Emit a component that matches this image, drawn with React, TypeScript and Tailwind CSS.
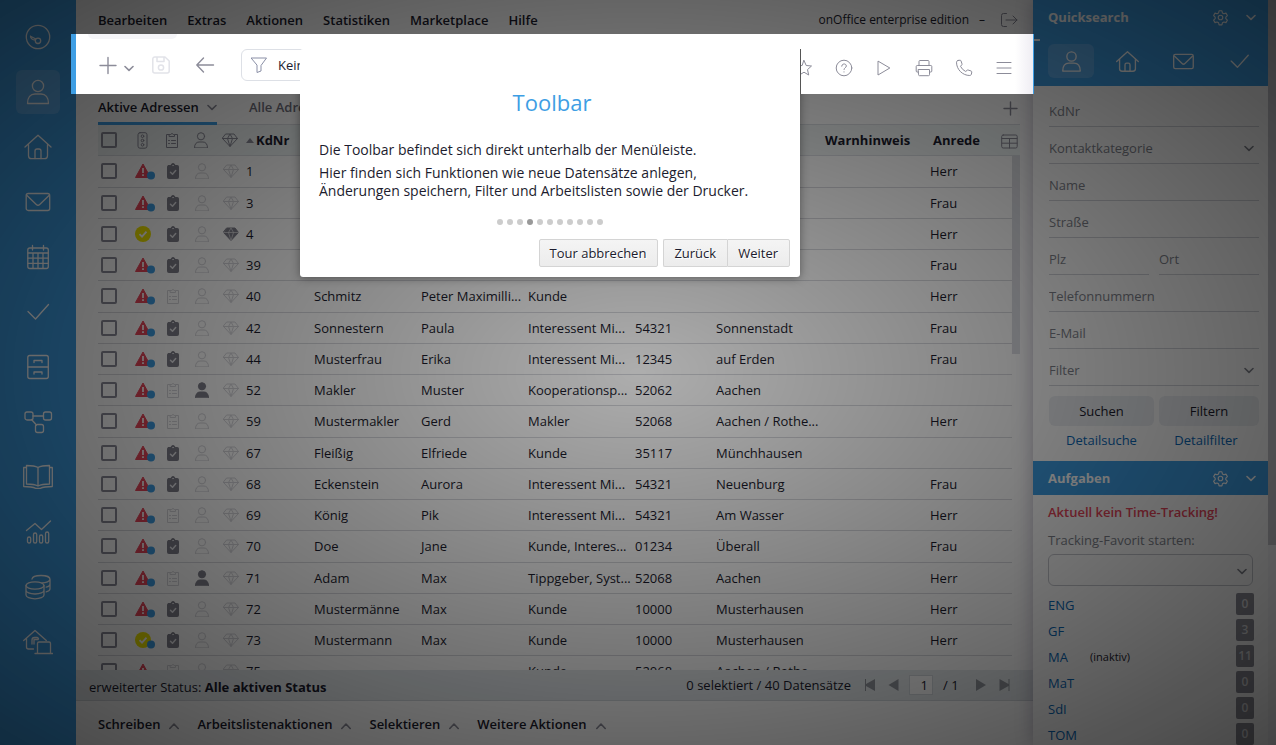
import type { ReactNode } from "react";
import { clsx } from "clsx";

type Address = {
  id: string;
  name?: string;
  firstName?: string;
  kind?: string;
  zip?: string;
  city?: string;
  salutation?: string;
  status?: "warn" | "ok";
  dot?: boolean;
  clip?: boolean;
  user?: boolean;
  vip?: boolean;
};

const addresses: Address[] = [
  { id: "1", clip: true, salutation: "Herr" },
  { id: "3", clip: true, salutation: "Frau" },
  { id: "4", clip: true, salutation: "Herr", status: "ok", dot: false, vip: true },
  { id: "39", clip: true, salutation: "Frau" },
  { id: "40", name: "Schmitz", firstName: "Peter Maximilli...", kind: "Kunde", salutation: "Herr" },
  { id: "42", clip: true, name: "Sonnestern", firstName: "Paula", kind: "Interessent Mi...", zip: "54321", city: "Sonnenstadt", salutation: "Frau" },
  { id: "44", clip: true, name: "Musterfrau", firstName: "Erika", kind: "Interessent Mi...", zip: "12345", city: "auf Erden", salutation: "Frau" },
  { id: "52", user: true, name: "Makler", firstName: "Muster", kind: "Kooperationsp...", zip: "52062", city: "Aachen" },
  { id: "59", name: "Mustermakler", firstName: "Gerd", kind: "Makler", zip: "52068", city: "Aachen / Rothe...", salutation: "Herr" },
  { id: "67", clip: true, name: "Fleißig", firstName: "Elfriede", kind: "Kunde", zip: "35117", city: "Münchhausen" },
  { id: "68", clip: true, name: "Eckenstein", firstName: "Aurora", kind: "Interessent Mi...", zip: "54321", city: "Neuenburg", salutation: "Frau" },
  { id: "69", name: "König", firstName: "Pik", kind: "Interessent Mi...", zip: "54321", city: "Am Wasser", salutation: "Herr" },
  { id: "70", clip: true, name: "Doe", firstName: "Jane", kind: "Kunde, Interes...", zip: "01234", city: "Überall", salutation: "Frau" },
  { id: "71", user: true, name: "Adam", firstName: "Max", kind: "Tippgeber, Syst...", zip: "52068", city: "Aachen", salutation: "Herr" },
  { id: "72", clip: true, name: "Mustermänne", firstName: "Max", kind: "Kunde", zip: "10000", city: "Musterhausen", salutation: "Herr" },
  { id: "73", clip: true, name: "Mustermann", firstName: "Max", kind: "Kunde", zip: "10000", city: "Musterhausen", salutation: "Herr", status: "ok" },
  { id: "75", kind: "Kunde", zip: "52068", city: "Aachen / Rothe..." },
];

const tasks = [
  { name: "ENG", count: 0 },
  { name: "GF", count: 3 },
  { name: "MA", count: 11, inactive: true },
  { name: "MaT", count: 0 },
  { name: "SdI", count: 0 },
  { name: "TOM", count: 0 },
];

type IconProps = {
  size: number;
  box?: number;
  stroke?: number;
  className?: string;
  children: ReactNode;
};

function Icon({ size, box = size, stroke = 1, className, children }: IconProps) {
  return (
    <svg
      aria-hidden="true"
      className={clsx("shrink-0", className)}
      fill="none"
      height={size}
      stroke="currentColor"
      strokeLinecap="round"
      strokeLinejoin="round"
      strokeWidth={stroke}
      viewBox={`0 0 ${box} ${box}`}
      width={size}
    >
      {children}
    </svg>
  );
}

const personPath = (
  <>
    <circle cx="15" cy="9" r="5.6" />
    <path d="M4.5 26.5c0-6 3-9.5 7.5-9.5h6c4.5 0 7.5 3.5 7.5 9.5z" />
  </>
);

const housePath = (
  <>
    <path d="M2 15 15 3.2 28 15" />
    <path d="M5.5 12.5v11.2a3 3 0 0 0 3 3h13a3 3 0 0 0 3-3V12.5" />
    <path d="M12 26.5V19a2 2 0 0 1 2-2h2a2 2 0 0 1 2 2v7.5" />
  </>
);

const mailPath = (
  <>
    <rect height="17" rx="2" width="23.5" x="3.2" y="6.5" />
    <path d="m4 8.5 9.3 9a2.5 2.5 0 0 0 3.4 0L26 8.5" />
  </>
);

const checkPath = <path d="m5 14.5 7.5 7.5L25.5 7.5" />;

const navItems: { label: string; icon: ReactNode }[] = [
  {
    label: "Dashboard",
    icon: (
      <>
        <circle cx="15" cy="15" r="11.7" />
        <circle cx="15" cy="18.8" r="2.7" />
        <path d="M7.5 14.2c.2 2.4 2 3.6 4.8 3.8M7.5 14.2l5.3 2.8" />
      </>
    ),
  },
  { label: "Adressen", icon: personPath },
  { label: "Immobilien", icon: housePath },
  { label: "E-Mail", icon: mailPath },
  {
    label: "Kalender",
    icon: (
      <>
        <rect height="20.5" rx="2" width="20.5" x="4.8" y="6" />
        <path d="M9.5 3.5V8M20.5 3.5V8M5 11h20M5 16.2h20M5 21.4h20M10 11v15.3M15 11v15.3M20 11v15.3" />
      </>
    ),
  },
  { label: "Aufgaben", icon: checkPath },
  {
    label: "Dateien",
    icon: (
      <>
        <rect height="23" rx="2" width="20.5" x="4.8" y="3.5" />
        <path d="M5 15h20M11 10.5v-2h8v2M11 22v-2h8v2" />
      </>
    ),
  },
  {
    label: "Prozesse",
    icon: (
      <>
        <rect height="8" rx="2" width="8" x="2" y="5" />
        <rect height="8" rx="2" width="8" x="20.5" y="5" />
        <rect height="8" rx="2" width="8" x="12.5" y="17.5" />
        <path d="M10 9h10.5M8.500 12.500l5 5.500" />
      </>
    ),
  },
  {
    label: "Bibliothek",
    icon: (
      <>
        <path d="M15 5.500C12 3.800 7.500 3.500 3.500 3.500V22c4 0 8.500.5 11.500 2 3-1.500 7.500-2 11.500-2V3.500c-4 0-8.500.3-11.500 2zM15 5.500V24" />
        <path d="M3.500 5.500H.7v19c4.500 0 9.300.5 12 1.800h4.600c2.700-1.300 7.500-1.800 12-1.800v-19h-2.800" />
      </>
    ),
  },
  {
    label: "Statistik",
    icon: (
      <>
        <rect height="6" rx="1.6" width="3.2" x="4.500" y="20" />
        <rect height="10" rx="1.6" width="3.2" x="10.500" y="16" />
        <rect height="8" rx="1.6" width="3.2" x="16.500" y="18" />
        <rect height="11" rx="1.6" width="3.2" x="22.500" y="15" />
        <path d="m3.500 13.500 8.500-7 6.500 6L27.500 4" />
      </>
    ),
  },
  {
    label: "Buchhaltung",
    icon: (
      <>
        <ellipse cx="12" cy="13.5" rx="9" ry="3.7" />
        <path d="M3 13.500v9.500c0 2.200 4 3.800 9 3.800s9-1.600 9-3.800v-9.500M3 18.200c0 2.200 4 3.800 9 3.800s9-1.600 9-3.800" />
        <path d="M9 7c.3-2 4-3.500 9-3.500s9 1.500 9 3.700v9.500c0 1.500-1.500 2.500-3.800 3.100M27 7.200c0 2.200-4 3.700-8 3.700M27 12c0 1.500-1.500 2.600-3.800 3.100" />
      </>
    ),
  },
  {
    label: "Marketing",
    icon: (
      <>
        <path d="m.7 13.500 11.300-10 11.300 10M3.500 11.500V20a2 2 0 0 0 2 2h5" />
        <path d="M15 12.500h-4v4.500M9 17v-4a2.500 2.500 0 0 1 2.500-2.500H14a1.500 1.500 0 0 1 1.500 1.500" />
        <path d="M14.500 25.500v-9a1.500 1.500 0 0 1 1.500-1.500h10a1.500 1.500 0 0 1 1.500 1.500v9M12 26.500h17.500" />
      </>
    ),
  },
];

function Chevron({ className, up }: { className?: string; up?: boolean }) {
  return (
    <Icon className={className} size={10} stroke={1.6}>
      <path d={up ? "m.8 7.5 4.200-4.500 4.200 4.500" : "m1 3.500 4 3.800 4-3.800"} />
    </Icon>
  );
}

function Gear() {
  return (
    <Icon box={24} size={17} stroke={1.6}>
      <circle cx="12" cy="12" r="3.200" />
      <path d="M10 2.500h4l.7 3 2.100 1.200 2.900-.9 2 3.500-2.200 2.100v2.200l2.200 2.100-2 3.500-2.900-.9-2.100 1.200-.7 3h-4l-.7-3-2.100-1.200-2.900.9-2-3.500 2.200-2.100v-2.200L2.300 9.300l2-3.500 2.900.9 2.100-1.200z" />
    </Icon>
  );
}

function Diamond({ filled }: { filled?: boolean }) {
  return (
    <Icon className="mr-px" size={16}>
      <path
        d="M4 2h8l3.500 4.500L8 14.500.5 6.500z"
        fill={filled ? "currentColor" : "none"}
      />
      <path
        className={clsx(filled && "text-[#d8d8dc]")}
        d="M.5 6.500h15M5.500 6.500 8 14.500l2.500-8M5.500 6.500 8 2l2.500 4.500"
        strokeWidth={filled ? 0.8 : 1}
      />
    </Icon>
  );
}

function Person({ filled }: { filled?: boolean }) {
  return (
    <Icon className="mr-px" size={16}>
      <circle cx="8" cy="4.3" fill={filled ? "currentColor" : "none"} r="3.6" />
      <path
        d="M1.500 15.500c0-3.500 2-5.500 4.500-5.500h4c2.500 0 4.500 2 4.500 5.500z"
        fill={filled ? "currentColor" : "none"}
      />
    </Icon>
  );
}

function Clipboard({ checked }: { checked?: boolean }) {
  if (checked) {
    return (
      <Icon className="mr-px" size={16}>
        <rect fill="currentColor" height="13" rx="1" width="11" x="2.5" y="2.5" />
        <path d="M6 2.500a2 2 0 0 1 4 0" fill="currentColor" />
        <path className="text-[#e6e6ea]" d="m5.500 9.200 2 2 3.200-3.700" strokeWidth="1.5" />
        <circle className="text-[#e6e6ea]" cx="8" cy="2.600" fill="currentColor" r=".3" />
      </Icon>
    );
  }
  return (
    <Icon className="mr-px" size={16}>
      <path d="M5 2.500H2.500v13h11v-13H11" />
      <path d="M5.500 2.500h1.200a1.400 1.400 0 0 1 2.600 0h1.200v2h-5z" />
      <path d="M4.500 8.500h1M7.500 8.500h4M4.500 11.500h1M7.500 11.500h4" />
    </Icon>
  );
}

function StatusMark({ status = "warn", dot = true }: Pick<Address, "status" | "dot">) {
  return (
    <svg aria-label={status} className="-mr-3" height="17" role="img" viewBox="0 0 21 17" width="21">
      {status === "ok" ? (
        <>
          <circle cx="8" cy="8" fill="#f0e600" r="8" />
          <path d="m4.500 8.200 2.500 2.500 4.500-5" fill="none" stroke="#fff" strokeWidth="1.9" />
        </>
      ) : (
        <>
          <path d="M8 1 15.500 14.500H.5z" fill="#e8475b" stroke="#e8475b" strokeLinejoin="round" />
          <path d="M8 5v5M8 11.300v1.700" stroke="#fff" strokeWidth="1.7" />
        </>
      )}
      {dot && <circle cx="16" cy="12.5" fill="#3e9ee4" r="4" />}
    </svg>
  );
}

function Checkbox({ label }: { label: string }) {
  return (
    <input
      aria-label={label}
      className="ml-[3px] block size-4 appearance-none rounded-xs border-2 border-[#8c8c99]"
      type="checkbox"
    />
  );
}

function NavBar() {
  return (
    <nav className="flex w-[76px] shrink-0 flex-col items-center gap-[11px] bg-[#3e9ee4] pt-[15px] text-white">
      {navItems.map((item, index) => (
        <button
          aria-label={item.label}
          className={clsx(
            "flex size-11 shrink-0 items-center justify-center rounded-md",
            index === 1 && "bg-[#5fadea]",
          )}
          key={item.label}
        >
          <Icon size={30} stroke={1.3}>
            {item.icon}
          </Icon>
        </button>
      ))}
    </nav>
  );
}

function MenuBar() {
  return (
    <header className="flex h-[34px] shrink-0 items-center bg-white pt-1.5 pr-[15px] pl-[22px]">
      <div className="flex flex-1 gap-5 font-semibold">
        {["Bearbeiten", "Extras", "Aktionen", "Statistiken", "Marketplace", "Hilfe"].map((item) => (
          <button key={item}>{item}</button>
        ))}
      </div>
      <span className="text-xs">onOffice enterprise edition</span>
      <span className="mx-2.5 text-xs">–</span>
      <button aria-label="Abmelden" className="ml-[5px] text-[#8c8c99]">
        <Icon size={18}>
          <path d="M6.500 2.500h-3a2 2 0 0 0-2 2v9a2 2 0 0 0 2 2h3M6 9h11M13 5l4 4-4 4" />
        </Icon>
      </button>
    </header>
  );
}

const toolIcons: { label: string; icon: ReactNode }[] = [
  {
    label: "Favoriten",
    icon: <path d="m9 1.500 2.200 5 5.300.5-4 3.600 1.200 5.400L9 13.200 4.300 16l1.200-5.400-4-3.600 5.300-.5z" />,
  },
  {
    label: "Hilfe",
    icon: (
      <>
        <circle cx="9" cy="9" r="7.8" />
        <path d="M6.700 7.200c0-3 4.600-3 4.600-.2 0 1.800-2.300 1.700-2.300 3.500M9 12.800v.2" />
      </>
    ),
  },
  { label: "Start", icon: <path d="M3 2.500v13.500L14.500 9.200z" /> },
  {
    label: "Drucken",
    icon: (
      <>
        <path d="M4 6.500v-4a1 1 0 0 1 1-1h8a1 1 0 0 1 1 1v4M3.500 13h-1.300a1 1 0 0 1-1-1V7.500a1 1 0 0 1 1-1h13.600a1 1 0 0 1 1 1V12a1 1 0 0 1-1 1h-1.300" />
        <path d="M3.500 10.500h11v5.200a1 1 0 0 1-1 1h-9a1 1 0 0 1-1-1z" />
      </>
    ),
  },
  {
    label: "Anrufen",
    icon: (
      <path d="M3 1.500 5 1.200c.5 0 .9.200 1 .7l1 3c.1.400 0 .8-.3 1L5.500 7.300a11 11 0 0 0 5.200 5.200l1.400-1.200c.3-.3.7-.4 1-.3l3 1c.5.200.7.600.7 1l-.4 2c-.1.900-.8 1.500-1.600 1.500C7.500 16.500 1.500 10.500 1.500 3.200c0-.8.7-1.600 1.500-1.700z" />
    ),
  },
  { label: "Menü", icon: <path d="M2 3.500h14M2 9h14M2 14.500h14" /> },
];

// sits above the dimmed page while the tour explains it
function Toolbar() {
  return (
    <div className="relative z-20 -mr-px -ml-[5px] flex h-[60px] shrink-0 border-r border-l-[5px] border-[#3e9ee4] bg-linear-to-l from-[#efedf3] to-white to-[18px] pr-[20px] pl-[22px] text-[#8c8c99]">
      <div className="absolute top-0 left-3 h-[5px] w-[89px] rounded-b-md bg-[#f5f5f8]" />
      <div className="flex flex-1 items-center pt-0.5">
        <button aria-label="Neu" className="flex items-center gap-1.5">
          <Icon size={20} stroke={1.4}>
            <path d="M10 2.500v16M2 10.500h16" />
          </Icon>
          <Chevron className="mt-1.5" />
        </button>
        <button aria-label="Speichern" className="ml-[17px] text-[#e2e3e9]" disabled>
          <Icon size={20} stroke={1.5}>
            <path d="M1.800 4a2 2 0 0 1 2-2H14l4.200 4v10a2 2 0 0 1-2 2H3.800a2 2 0 0 1-2-2zM6 2v4.500h7V2" />
            <circle cx="10" cy="12.5" r="2.6" />
          </Icon>
        </button>
        <button aria-label="Zurück" className="ml-6">
          <Icon size={20} stroke={1.4}>
            <path d="M18.500 10H1.800M8.500 3 1.800 10l6.700 7" />
          </Icon>
        </button>
        <button className="ml-[26px] flex h-8 w-[200px] items-center rounded-md border border-[#dde0e6] pl-2 text-[#1c1c2e]">
          <Icon className="text-[#8a8fa6]" size={18}>
            <path d="M1.500 2h15L11 9.500V15l-4 1.500v-7z" />
          </Icon>
          <span className="ml-2.5">Kein Filter</span>
        </button>
      </div>
      <div className="flex items-center gap-[22px] pt-2">
        {toolIcons.map((tool) => (
          <button aria-label={tool.label} key={tool.label}>
            <Icon size={18}>{tool.icon}</Icon>
          </button>
        ))}
      </div>
    </div>
  );
}

function Tabs() {
  return (
    <div className="mr-[13px] ml-[22px] flex h-[31px] shrink-0 border-b border-[#dcdfe4]">
      <button className="-mb-px flex w-[119px] items-center gap-2 border-b-3 border-[#3e9ee4] pb-0.5 font-semibold whitespace-nowrap">
        Aktive Adressen
        <Chevron className="text-[#8c8c99]" />
      </button>
      <button className="ml-8 pb-1 font-semibold text-[#70707c]">Alle Adressen</button>
      <button aria-label="Tab hinzufügen" className="ml-auto text-[#8c8c99]">
        <Icon size={20} stroke={1.4}>
          <path d="M10.500 3v13M4 9.500h13" />
        </Icon>
      </button>
    </div>
  );
}

const headCell = "h-[31px] border-b border-[#dcdfe4] bg-[#f0f5f5] p-0 text-left font-bold";
const bodyCell = "overflow-hidden border-b border-[#d8d9de] p-0 pl-px whitespace-nowrap";
const iconBox = "flex justify-center";
const iconOn = "text-[#80808c]";
const iconOff = "text-[#d6d6db]";

function AddressTable() {
  return (
    <div className="relative mr-[13px] ml-[22px] flex min-h-0 flex-1 overflow-hidden">
      <table className="w-full table-fixed border-separate border-spacing-0 self-start">
        <colgroup>
          <col className="w-[31px]" />
          <col className="w-[29px]" />
          <col className="w-[29px]" />
          <col className="w-[29px]" />
          <col className="w-[29px]" />
          <col className="w-[68px]" />
          <col className="w-[107px]" />
          <col className="w-[107px]" />
          <col className="w-[107px]" />
          <col className="w-[81px]" />
          <col className="w-[109px]" />
          <col className="w-[105px]" />
          <col />
        </colgroup>
        <thead>
          <tr className="text-[#8c8c99]">
            <th className={headCell}>
              <Checkbox label="Alle auswählen" />
            </th>
            <th className={headCell}>
              <div className={iconBox}>
                <Icon className="mr-0.5" size={17}>
                  <rect height="15.5" rx="2" width="9" x="4" y=".7" />
                  <circle cx="8.5" cy="4.2" r="1.300" />
                  <circle cx="8.5" cy="8.500" r="1.300" />
                  <circle cx="8.5" cy="12.800" r="1.300" />
                </Icon>
              </div>
            </th>
            <th className={headCell}>
              <div className={iconBox}>
                <Clipboard />
              </div>
            </th>
            <th className={headCell}>
              <div className={iconBox}>
                <Person />
              </div>
            </th>
            <th className={headCell}>
              <div className={iconBox}>
                <Diamond />
              </div>
            </th>
            <th className={headCell}>
              <button className="flex items-center gap-0.5 pl-px text-[#1c1c2e]">
                <svg aria-hidden="true" className="text-[#8c8c99]" fill="currentColor" height="5" viewBox="0 0 8 5" width="8">
                  <path d="M0 5 4 0l4 5z" />
                </svg>
                KdNr
              </button>
            </th>
            <th className={headCell} />
            <th className={headCell} />
            <th className={headCell} />
            <th className={headCell} />
            <th className={headCell} />
            <th className={clsx(headCell, "pl-px text-[#1c1c2e]")}>Warnhinweis</th>
            <th className={clsx(headCell, "pl-1 text-[#1c1c2e]")}>Anrede</th>
          </tr>
        </thead>
        <tbody>
          {addresses.map((row) => (
            <tr className="h-[31px] nth-[4n+1]:h-8 nth-[4n+1]:*:pb-px" key={row.id}>
              <td className={bodyCell}>
                <div className="-ml-px">
                  <Checkbox label={`Datensatz ${row.id}`} />
                </div>
              </td>
              <td className="border-b border-[#d8d9de] p-0">
                <div className="pl-[6px]">
                  <StatusMark dot={row.dot} status={row.status} />
                </div>
              </td>
              <td className={bodyCell}>
                <div className={clsx(iconBox, row.clip ? iconOn : iconOff)}>
                  <Clipboard checked={row.clip} />
                </div>
              </td>
              <td className={bodyCell}>
                <div className={clsx(iconBox, row.user ? iconOn : iconOff)}>
                  <Person filled={row.user} />
                </div>
              </td>
              <td className={bodyCell}>
                <div className={clsx(iconBox, row.vip ? iconOn : iconOff)}>
                  <Diamond filled={row.vip} />
                </div>
              </td>
              <td className={bodyCell}>{row.id}</td>
              <td className={bodyCell}>{row.name}</td>
              <td className={bodyCell}>{row.firstName}</td>
              <td className={bodyCell}>{row.kind}</td>
              <td className={bodyCell}>{row.zip}</td>
              <td className={bodyCell}>{row.city}</td>
              <td className={bodyCell} />
              <td className={bodyCell}>{row.salutation}</td>
            </tr>
          ))}
        </tbody>
      </table>
      <div className="w-2 shrink-0">
        <div className="h-[31px] border-b border-[#dcdfe4] bg-[#f0f5f5]" />
        <div className="h-[198px] bg-[#dcdde3]" />
      </div>
      <button aria-label="Spalten" className="absolute top-2 right-0.5 text-[#8c8c99]">
        <Icon size={17}>
          <rect height="13" rx="1.5" width="15.5" x=".7" y="2" />
          <path d="M1 5.500h15M1 10.200h15M8.500 5.500V15" />
        </Icon>
      </button>
    </div>
  );
}

const pagerIcons = {
  first: "M4 1v12h1V8l9 5V1L5 6V1z",
  prev: "M3.500 7 13.500 1v12z",
  next: "M13 7 3 1v12z",
  last: "M12.500 1v12h-1V8l-9 5V1l9 5V1z",
};

function PagerButton({ kind, label }: { kind: keyof typeof pagerIcons; label: string }) {
  return (
    <button aria-label={label}>
      <svg aria-hidden="true" fill="currentColor" height="14" viewBox="0 0 14 14" width="14">
        <path d={pagerIcons[kind]} />
      </svg>
    </button>
  );
}

function StatusBar() {
  return (
    <div className="flex h-[31px] shrink-0 items-center border-b border-[#d4d9de] bg-[#e6ebee] pr-[22px] pl-[13px]">
      <p className="flex-1 pt-1">
        erweiterter Status: <b>Alle aktiven Status</b>
      </p>
      <p>0 selektiert / 40 Datensätze</p>
      <div className="ml-2.5 flex items-center gap-2.5 text-[#94989f]">
        <PagerButton kind="first" label="Erste Seite" />
        <PagerButton kind="prev" label="Vorherige Seite" />
        <input
          aria-label="Seite"
          className="h-5 w-6 border border-[#d4d9de] bg-white pr-1 text-right text-[#1c1c2e]"
          defaultValue="1"
        />
        <span className="w-5 whitespace-nowrap text-[#1c1c2e]">/ 1</span>
        <PagerButton kind="next" label="Nächste Seite" />
        <PagerButton kind="last" label="Letzte Seite" />
      </div>
    </div>
  );
}

function ActionBar() {
  return (
    <footer className="flex h-11 shrink-0 items-center gap-[18px] bg-white pt-0.5 pl-[22px] font-semibold">
      {["Schreiben", "Arbeitslistenaktionen", "Selektieren", "Weitere Aktionen"].map((item) => (
        <button className="flex items-center gap-[9px]" key={item}>
          {item}
          <Chevron className="mt-1 text-[#8c8c99]" up />
        </button>
      ))}
    </footer>
  );
}

function PanelTitle({ children }: { children: ReactNode }) {
  return (
    <div className="flex h-[34px] items-center pr-3 pl-[15px] text-white">
      <h2 className="flex-1 font-bold">{children}</h2>
      <button aria-label="Einstellungen">
        <Gear />
      </button>
      <button aria-label="Einklappen" className="ml-[17px]">
        <Chevron />
      </button>
    </div>
  );
}

const field =
  "h-[37px] w-full min-w-0 appearance-none rounded-none border-b border-[#d0d2d8] bg-transparent pt-1.5 text-[#80838c] placeholder:text-[#80838c]";

function SelectField({ label }: { label: string }) {
  return (
    <div className="relative">
      <select aria-label={label} className={field}>
        <option>{label}</option>
      </select>
      <Chevron className="pointer-events-none absolute top-4 right-[5px] text-[#80838c]" />
    </div>
  );
}

function SidePanel() {
  return (
    <aside className="w-[235px] shrink-0 bg-[#fdfdfd] shadow-[0_0_18px_rgba(60,50,90,0.35)]">
      <section>
        <div className="relative h-[86px] bg-[#3e9ee4]">
          <div className="absolute top-[39px] left-px h-0.5 w-1.5 bg-white" />
          <PanelTitle>Quicksearch</PanelTitle>
          <div className="flex gap-2.5 pt-2.5 pl-[15px] text-white">
            {[personPath, housePath, mailPath, checkPath].map((icon, index) => (
              <button
                aria-label={["Adressen", "Immobilien", "E-Mail", "Aufgaben"][index]}
                className={clsx(
                  "flex h-[34px] w-[46px] shrink-0 items-center justify-center rounded-md",
                  index === 0 && "bg-[#5fadea]",
                )}
                key={index}
              >
                <Icon box={30} size={25} stroke={1.600}>
                  {icon}
                </Icon>
              </button>
            ))}
          </div>
        </div>
        <form className="pt-1 pr-[9px] pl-4">
          <input aria-label="KdNr" className={field} placeholder="KdNr" />
          <SelectField label="Kontaktkategorie" />
          <input aria-label="Name" className={field} placeholder="Name" />
          <input aria-label="Straße" className={field} placeholder="Straße" />
          <div className="flex gap-2.5">
            <input aria-label="Plz" className={field} placeholder="Plz" />
            <input aria-label="Ort" className={field} placeholder="Ort" />
          </div>
          <input aria-label="Telefonnummern" className={field} placeholder="Telefonnummern" />
          <input aria-label="E-Mail" className={field} placeholder="E-Mail" />
          <SelectField label="Filter" />
          <div className="grid grid-cols-[105px_1fr] gap-x-[5px] pt-2.5 text-center">
            <button className="h-[30px] rounded-md bg-[#eaedf1]" type="button">
              Suchen
            </button>
            <button className="h-[30px] rounded-md bg-[#eaedf1]" type="button">
              Filtern
            </button>
            <a className="pt-1 text-[#0a69b8]" href="#detailsuche">
              Detailsuche
            </a>
            <a className="pt-1 pr-1.5 text-[#0a69b8]" href="#detailfilter">
              Detailfilter
            </a>
          </div>
        </form>
      </section>
      <section className="pt-[11px]">
        <div className="bg-[#3e9ee4]">
          <PanelTitle>Aufgaben</PanelTitle>
        </div>
        <div className="px-[15px] pt-[7px]">
          <p className="font-semibold text-[#e8475b]">Aktuell kein Time-Tracking!</p>
          <label className="mt-2 block text-[#80838c]" htmlFor="tracking">
            Tracking-Favorit starten:
          </label>
          <div className="relative mt-1">
            <select
              className="h-8 w-full appearance-none rounded-md border border-[#c4c6cc]"
              id="tracking"
            >
              <option />
            </select>
            <Chevron className="pointer-events-none absolute top-3 right-1.5 text-[#80838c]" />
          </div>
          <ul className="mt-1.5 flex flex-col">
            {tasks.map((task) => (
              <li className="flex h-[26px] items-center" key={task.name}>
                <a className="w-[42px] text-[#0a69b8]" href={`#${task.name}`}>
                  {task.name}
                </a>
                {task.inactive && <span className="text-[11px]">(inaktiv)</span>}
                <span className="-mr-px mb-0.5 ml-auto flex h-[22px] w-[18px] items-center justify-center rounded-xs bg-[#8c8c96] text-xs font-semibold text-[#d8d8dc]">
                  {task.count}
                </span>
              </li>
            ))}
          </ul>
        </div>
      </section>
    </aside>
  );
}

const tourButton =
  "h-7 border border-[#d4d4d4] bg-linear-to-b from-[#f4f4f4] to-[#ececec] pr-[11px] pl-2.5 text-[#1c1c2e] [text-shadow:1px_1px_0_#fff]";

function TourStep() {
  return (
    <div
      aria-label="Toolbar"
      className="fixed top-[49px] left-[300px] z-30 w-[500px] rounded-[3px] bg-white p-2.5 before:absolute before:inset-0 before:rounded-[3px] before:shadow-[0_1px_10px_rgba(0,0,0,0.4)] before:[clip-path:inset(45px_-20px_-20px_-20px)]"
      role="dialog"
    >
      <div className="absolute top-0 left-full h-[45px] w-px bg-[#555]" />
      <div className="relative">
        <h1 className="pt-[27px] pl-1 text-center text-[22px] leading-8 text-[#3e9ee4]">Toolbar</h1>
        <div className="px-[9px] pt-[23px] text-sm leading-[18px]">
          <p>Die Toolbar befindet sich direkt unterhalb der Menüleiste.</p>
          <p className="mt-[5px]">
            Hier finden sich Funktionen wie neue Datensätze anlegen,
            <br />
            Änderungen speichern, Filter und Arbeitslisten sowie der Drucker.
          </p>
        </div>
        <ul className="mt-[19px] flex justify-center gap-1">
          {Array.from({ length: 11 }, (_, index) => (
            <li
              className={clsx("size-1.5 rounded-full", index === 3 ? "bg-[#999]" : "bg-[#ccc]")}
              key={index}
            />
          ))}
        </ul>
        <div className="mt-3.5 flex justify-end">
          <button className={clsx(tourButton, "mr-[5px] rounded-xs")}>Tour abbrechen</button>
          <button className={clsx(tourButton, "rounded-l-xs border-r-0")}>Zurück</button>
          <button className={clsx(tourButton, "rounded-r-xs")}>Weiter</button>
        </div>
      </div>
    </div>
  );
}

export default function App() {
  return (
    <div className="flex h-screen overflow-hidden bg-white font-['Open_Sans',sans-serif] text-[13px] leading-5 text-[#1c1c2e]">
      <NavBar />
      <main className="flex min-w-0 flex-1 flex-col">
        <MenuBar />
        <Toolbar />
        <Tabs />
        <AddressTable />
        <StatusBar />
        <ActionBar />
      </main>
      <SidePanel />
      <div className="w-2 shrink-0 bg-[#f4f4f6]">
        <div className="h-[545px] bg-[#c6c6cc]" />
      </div>
      <div className="fixed inset-0 z-10 bg-[radial-gradient(ellipse_farthest-corner,rgba(0,0,0,0.4)_0%,rgba(0,0,0,0.9)_100%)] opacity-80" />
      <TourStep />
    </div>
  );
}
